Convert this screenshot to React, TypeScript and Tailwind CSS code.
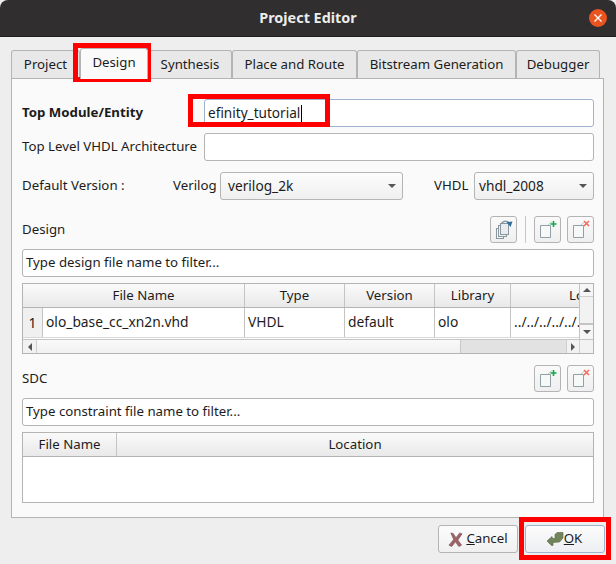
import type { ReactNode } from 'react';

const tabs = ['Project', 'Design', 'Synthesis', 'Place and Route', 'Bitstream Generation', 'Debugger'];
const tabWidths = ['w-[69px]', 'w-[68px]', 'w-[84px]', 'w-[125px]', 'w-[159px]', 'w-[84px]'];

function PageIcon({ variant }: { variant: 'add' | 'remove' | 'copy' }) {
  if (variant === 'copy') {
    return (
      <svg width="18" height="20" viewBox="0 0 18 20" fill="none">
        <rect x="1.5" y="8.5" width="7" height="10" fill="#f4f6f7" stroke="#8a979e" />
        <rect x="3.5" y="5.5" width="8" height="11" fill="#eef1f2" stroke="#8a979e" />
        <rect x="5.5" y="3.5" width="8" height="11" fill="#e8ecee" stroke="#8a979e" />
        <path d="M6 4 C8 0.5 12 0.5 14 3" stroke="#8a979e" strokeWidth="1.5" />
        <path d="M11.5 2 L17.5 1.5 L15.5 7 Z" fill="#2d6f9f" />
      </svg>
    );
  }
  return (
    <svg width="22" height="22" viewBox="0 0 22 22" fill="none">
      <path d="M3.5 6.5 H13.5 V18.5 H3.5 Z" fill="#f7f8f8" stroke="#90a0a6" />
      <path d="M11 6 L15 2.5" stroke="#c3cbce" />
      {variant === 'add' ? (
        <path d="M16.5 2 V8 M13.5 5 H19.5" stroke="#12a84a" strokeWidth="1.6" />
      ) : (
        <path d="M14 2 L19 7 M19 2 L14 7" stroke="#f0695a" strokeWidth="1.5" />
      )}
    </svg>
  );
}

function ToolButton({ variant }: { variant: 'add' | 'remove' | 'copy' }) {
  return (
    <div className="flex h-[27px] w-[27px] items-center justify-center rounded-[3px] border border-[#b4b4b4] bg-gradient-to-b from-[#fafafa] to-[#efefef]">
      <PageIcon variant={variant} />
    </div>
  );
}

function TextBox({ value, focused, className }: { value?: string; focused?: boolean; className?: string }) {
  return (
    <div
      className={`flex h-[28px] items-center rounded-[3px] border bg-white px-[3px] ${
        focused ? 'border-[#9fb4cc] text-[13.6px]' : 'border-[#b4b4b4]'
      } ${className ?? ''}`}
    >
      {value}
      {focused && <span className="ml-px h-[17px] w-px bg-black" />}
    </div>
  );
}

function Select({ value, className }: { value: string; className: string }) {
  return (
    <div
      className={`flex h-[28px] items-center justify-between rounded-[3px] border border-[#b4b4b4] bg-gradient-to-b from-[#fcfcfc] to-[#efefef] pr-[6px] text-[13.7px] ${className}`}
    >
      {value}
      <span className="h-0 w-0 border-x-[4px] border-t-[4px] border-x-transparent border-t-[#555]" />
    </div>
  );
}

function HeaderCell({ children, className }: { children: ReactNode; className: string }) {
  return (
    <div className={`flex h-full shrink-0 items-center justify-center overflow-hidden whitespace-nowrap border-r border-[#c4c4c4] ${className}`}>
      {children}
    </div>
  );
}

function Cell({ children, className }: { children: ReactNode; className: string }) {
  return (
    <div className={`flex h-full shrink-0 items-center overflow-hidden whitespace-nowrap border-r border-[#c4c4c4] pl-[3px] text-[13.8px] ${className}`}>
      {children}
    </div>
  );
}

function Arrow({ dir }: { dir: 'up' | 'down' | 'left' | 'right' }) {
  const cls = {
    up: 'border-x-[4px] border-b-[4px] border-x-transparent border-b-[#555]',
    down: 'border-x-[4px] border-t-[4px] border-x-transparent border-t-[#555]',
    left: 'border-y-[4px] border-r-[4px] border-y-transparent border-r-[#555]',
    right: 'border-y-[4px] border-l-[4px] border-y-transparent border-l-[#555]',
  }[dir];
  return <span className={`h-0 w-0 ${cls}`} />;
}

function DesignTable() {
  return (
    <div className="flex h-[71px] flex-col border border-[#b4b4b4] bg-white">
      <div className="flex min-h-0 flex-1">
        <div className="min-w-0 flex-1">
          <div className="flex h-[24px] border-b border-[#b4b4b4] bg-gradient-to-b from-[#fafafa] to-[#e9e9e9]">
            <HeaderCell className="w-[222px] pl-[20px]">File Name</HeaderCell>
            <HeaderCell className="w-[100px]">Type</HeaderCell>
            <HeaderCell className="w-[90px]">Version</HeaderCell>
            <HeaderCell className="w-[76px]">Library</HeaderCell>
            <div className="flex h-full min-w-0 flex-1 items-center overflow-hidden whitespace-nowrap pl-[58px]">Location</div>
          </div>
          <div className="flex h-[30px] border-b border-[#d8d8d8]">
            <div className="flex h-full w-[20px] shrink-0 items-center justify-center border-r border-[#c4c4c4] bg-[#f0f0f0] text-[14px]">1</div>
            <Cell className="w-[202px]">olo_base_cc_xn2n.vhd</Cell>
            <Cell className="w-[100px]">VHDL</Cell>
            <Cell className="w-[90px]">default</Cell>
            <Cell className="w-[76px]">olo</Cell>
            <div className="flex h-full min-w-0 flex-1 items-center overflow-hidden whitespace-nowrap pl-[3px] text-[13.8px]">../../../../../../src</div>
          </div>
        </div>
        <div className="flex w-[14px] shrink-0 flex-col border-l border-[#c4c4c4] bg-[#f6f6f6]">
          <div className="flex h-[13px] items-center justify-center border-b border-[#d0d0d0]"><Arrow dir="up" /></div>
          <div className="flex-1 border-b-2 border-[#c4c4c4] bg-[#f2f2f2]" />
          <div className="flex h-[14px] items-center justify-center"><Arrow dir="down" /></div>
        </div>
      </div>
      <div className="flex h-[14px] shrink-0 border-t border-[#c4c4c4] bg-[#f2f2f2]">
        <div className="flex w-[14px] items-center justify-center border-r border-[#d0d0d0]"><Arrow dir="left" /></div>
        <div className="w-[423px] bg-gradient-to-b from-[#fafafa] to-[#f0f0f0]" />
        <div className="w-[106px] border-l border-[#c8c8c8] bg-[#e2e2e2]" />
        <div className="flex w-[14px] items-center justify-center border-x border-[#d0d0d0]"><Arrow dir="right" /></div>
      </div>
    </div>
  );
}

function SdcTable() {
  return (
    <div className="flex h-[71px] flex-col border border-[#b4b4b4] bg-white">
      <div className="flex h-[24px] border-b border-[#b4b4b4] bg-gradient-to-b from-[#fafafa] to-[#e9e9e9]">
        <HeaderCell className="w-[94px]">File Name</HeaderCell>
        <div className="flex flex-1 items-center justify-center">Location</div>
      </div>
    </div>
  );
}

export default function App() {
  return (
    <div className="relative h-[564px] w-[616px] overflow-hidden bg-[#eeeeee] font-['Noto_Sans',sans-serif] text-[13.25px] text-[#1c1c1c]">
      <div className="relative flex h-[37px] items-center justify-center rounded-t-[8px] border-b border-[#1f1e1e] bg-[#302e2e] text-[14.4px] font-bold text-[#ececec]">
        Project Editor
        <div className="absolute right-[9px] top-[9px] flex h-[18px] w-[18px] items-center justify-center rounded-full bg-[#e95420]">
          <svg width="10" height="10" viewBox="0 0 10 10">
            <path d="M1.5 1.5 L8.5 8.5 M8.5 1.5 L1.5 8.5" stroke="#ffffff" strokeWidth="1.3" />
          </svg>
        </div>
      </div>

      <div className="flex h-[41px] items-end pl-[11px]">
        {tabs.map((tab, i) =>
          tab === 'Design' ? (
            <div key={tab} className={`z-10 -mb-px flex h-[31px] items-center justify-center rounded-t-[3px] border border-b-0 border-[#b4b4b4] bg-[#fafafa] pb-[2px] ${tabWidths[i]}`}>
              {tab}
            </div>
          ) : (
            <div key={tab} className={`flex h-[28px] items-center justify-center rounded-t-[3px] border border-b-0 border-[#b4b4b4] bg-[#e8e8e8] ${tabWidths[i]}`}>
              {tab}
            </div>
          ),
        )}
      </div>

      <div className="ml-[11px] flex h-[440px] w-[593px] flex-col border border-[#b4b4b4] bg-[#fafafa] pl-[10px] pr-[9px] pt-[20px]">
        <div className="flex items-center justify-between">
          <span className="font-bold">Top Module/Entity</span>
          <TextBox value="efinity_tutorial" focused className="w-[390px]" />
        </div>
        <div className="mt-[6px] flex items-center justify-between">
          <span className="whitespace-nowrap">Top Level VHDL Architecture</span>
          <TextBox className="w-[390px]" />
        </div>
        <div className="mt-[11px] flex items-center">
          <span className="w-[151px]">Default Version :</span>
          <span className="w-[47px]">Verilog</span>
          <Select value="verilog_2k" className="w-[183px] pl-[7px]" />
          <span className="ml-[31px] w-[40px]">VHDL</span>
          <Select value="vhdl_2008" className="w-[120px] pl-[4px]" />
        </div>

        <div className="mt-[16px] flex h-[27px] items-center">
          <span className="flex-1">Design</span>
          <ToolButton variant="copy" />
          <div className="mx-[8px] h-[27px] w-px bg-[#c8c8c8]" />
          <ToolButton variant="add" />
          <div className="w-[6px]" />
          <ToolButton variant="remove" />
        </div>
        <TextBox value="Type design file name to filter..." className="mt-[6px]" />
        <div className="mt-[6px]">
          <DesignTable />
        </div>

        <div className="mt-[11px] flex h-[27px] items-center">
          <span className="flex-1">SDC</span>
          <ToolButton variant="add" />
          <div className="w-[6px]" />
          <ToolButton variant="remove" />
        </div>
        <TextBox value="Type constraint file name to filter..." className="mt-[6px]" />
        <div className="mt-[6px]">
          <SdcTable />
        </div>
      </div>

      <div className="mt-[7px] flex justify-end gap-[7px] pr-[11px]">
        <div className="flex h-[28px] w-[80px] items-center justify-center gap-[3px] rounded-[3px] border border-[#b4b4b4] bg-gradient-to-b from-[#fcfcfc] to-[#f0f0f0]">
          <svg width="15" height="15" viewBox="0 0 16 16">
            <path d="M3 1 L5.5 1.5 L8.5 6 L12.5 1 L15 2 L10.5 8.5 L14.5 14 L11.5 15.5 L8 10.5 L4 15.5 L1 14 L6 8 Z" fill="#9f6266" stroke="#744a4c" strokeWidth="0.6" />
          </svg>
          <span><span className="underline">C</span>ancel</span>
        </div>
        <div className="flex h-[28px] w-[80px] items-center justify-center gap-0 rounded-[3px] border border-[#9fb4cc] bg-gradient-to-b from-[#fcfcfc] to-[#eceff2] pr-[2px]">
          <svg width="18" height="16" viewBox="0 0 18 16">
            <path d="M1 10 L6 5.5 L6.5 7.5 L9 7.5 L9 3.5 L11 1.5 L17 1.5 L17 7 L13.5 11 L7 11.5 L7 14.5 L5.5 14.5 Z" fill="#72855a" stroke="#56653f" strokeWidth="0.6" />
          </svg>
          <span><span className="underline">O</span>K</span>
        </div>
      </div>

      <div className="absolute left-[73px] top-[43px] h-[39px] w-[78px] border-[5px] border-[#fe0000]" />
      <div className="absolute left-[188px] top-[94px] h-[33px] w-[142px] border-[5px] border-[#fe0000]" />
      <div className="absolute left-[519px] top-[517px] h-[43px] w-[92px] border-[5px] border-[#fe0000]" />
    </div>
  );
}
